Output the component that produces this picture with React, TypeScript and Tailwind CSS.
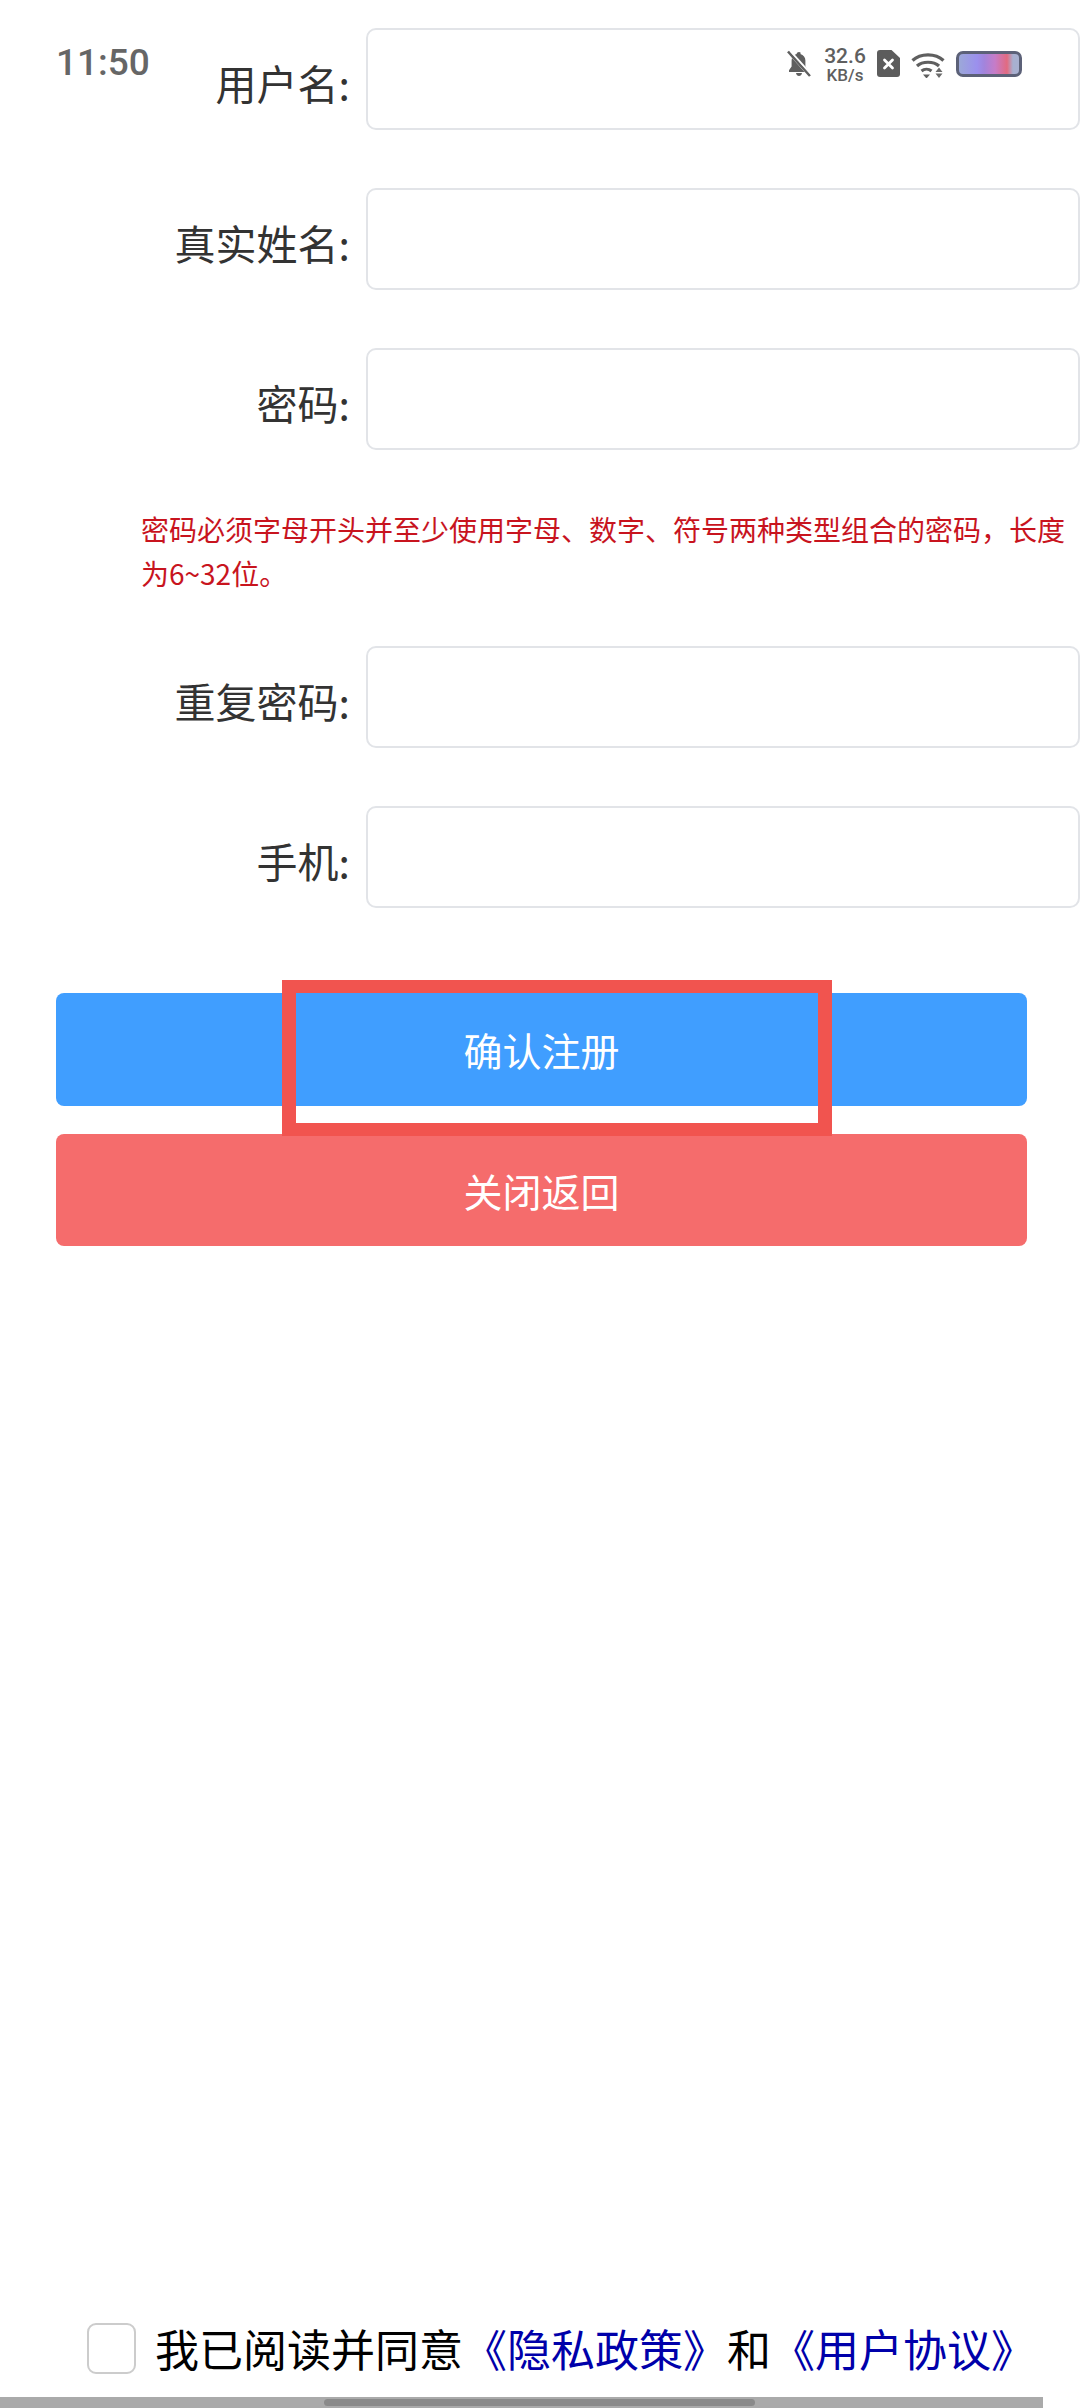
const cjk = "font-['Noto_Sans_CJK_SC','Noto_Sans',sans-serif]";

function Field({ label, type = 'text' }: { label: string; type?: string }) {
  return (
    <div className="flex h-[102px] items-center">
      <label className="w-[350px] shrink-0 pt-[6px] text-right text-[41px] leading-[60px] text-[#333333]">{label}</label>
      <input
        type={type}
        className="ml-[16px] h-[102px] w-[714px] shrink-0 rounded-[10px] border-2 border-[#e2e4e8] bg-white outline-none"
      />
    </div>
  );
}

function BellOffIcon() {
  return (
    <svg width="26" height="27" viewBox="0 0 26 27" fill="none">
      <path d="M13 2c-1.3 0-2.2.8-2.4 1.9C7.5 4.8 5.6 7.3 5.6 10.4v6L3 20.2V22h15.5L5.6 7.5M8 5.5 22 21v-.8l-2.6-3.8v-6c0-3.1-1.9-5.6-5-6.5C15.200 2.800 14.300 2 13 2Z" fill="#5f5f5f" />
      <path d="M10 23h6c-.3 1.800-1.500 3-3 3s-2.700-1.200-3-3Z" fill="#5f5f5f" />
      <path d="M2 1.500 24 26" stroke="#5f5f5f" strokeWidth="2.600" />
      <path d="M4.500 1 26 25" stroke="#ffffff" strokeWidth="1.600" />
    </svg>
  );
}

function SimIcon() {
  return (
    <svg width="23" height="27" viewBox="0 0 23 27">
      <path d="M3 0h11.500L23 8v16a3 3 0 0 1-3 3H3a3 3 0 0 1-3-3V3a3 3 0 0 1 3-3Z" fill="#5c5c5c" />
      <path d="m7.500 10 8 8m0-8-8 8" stroke="#ffffff" strokeWidth="2.800" strokeLinecap="round" />
    </svg>
  );
}

function WifiIcon() {
  return (
    <svg width="34" height="26" viewBox="0 0 34 26" fill="none">
      <path d="M1.500 8.500C9.500 1 24.500 1 32.500 8.500" stroke="#5f5f5f" strokeWidth="3.200" />
      <path d="M6 14c5.500-5 16.500-5 22 0" stroke="#5f5f5f" strokeWidth="3.200" />
      <path d="M10.500 19c3-2.500 7-2.500 10 0" stroke="#5f5f5f" strokeWidth="3" />
      <path d="m12 22.500h7L15.500 26.500Z" fill="#5f5f5f" />
      <path d="m28 15.500 3.500 4.500h-7Zm-3.500 6h7L28 26Z" fill="#6a6a6a" />
    </svg>
  );
}

function StatusBar() {
  return (
    <div className="absolute left-0 top-0 h-[90px] w-full font-['Roboto',sans-serif] text-[#5f5f5f]">
      <span className="absolute left-[56px] top-[41px] text-[37px] font-medium leading-[44px] text-[#666666]">11:50</span>
      <div className="absolute left-[786px] top-[47px] flex items-start">
        <div className="mt-[3px]">
          <BellOffIcon />
        </div>
        <div className="ml-[10px] flex w-[46px] flex-col items-center">
          <span className="text-[21px] font-medium leading-[18px]">32.6</span>
          <span className="mt-[2px] text-[17px] font-medium leading-[17px]">KB/s</span>
        </div>
        <div className="ml-[9px] mt-[3px]">
          <SimIcon />
        </div>
        <div className="ml-[11px] mt-[5px]">
          <WifiIcon />
        </div>
        <div className="ml-[11px] mt-[4px] h-[26px] w-[66px] rounded-[7px] border-[3px] border-[#5c6178] bg-[linear-gradient(90deg,#9ca8d8_0%,#9b90ee_30%,#a284dc_42%,#c67cc8_60%,#e26a80_80%,#a8b0d0_90%)]" />
      </div>
    </div>
  );
}

export default function App() {
  return (
    <div className={`relative flex h-[2408px] w-[1080px] flex-col overflow-hidden bg-white ${cjk}`}>
      <StatusBar />

      <form className="flex flex-col pt-[28px]">
        <div className="flex flex-col gap-[58px]">
          <Field label="用户名:" />
          <Field label="真实姓名:" />
          <Field label="密码:" type="password" />
        </div>
        <p className="mb-[51px] mt-[57px] pl-[141px] pr-[10px] text-[28px] leading-[44px] text-[#c8141e]">
          密码必须字母开头并至少使用字母、数字、符号两种类型组合的密码，长度为6~32位。
        </p>
        <div className="flex flex-col gap-[58px]">
          <Field label="重复密码:" type="password" />
          <Field label="手机:" />
        </div>

        <div className="relative mt-[85px] flex flex-col gap-[28px] px-[56px] pr-[53px]">
          <button type="button" className="h-[113px] rounded-[8px] bg-[#409eff] text-[39px] text-white">
            确认注册
          </button>
          <button type="button" className="h-[112px] rounded-[8px] bg-[#f56c6c] text-[39px] text-white">
            关闭返回
          </button>
          <div className="absolute left-[282px] top-[-13px] h-[156px] w-[550px] border-x-[14px] border-y-[13px] border-[#f1544f]" />
        </div>
      </form>

      <div className="mt-auto flex items-center pb-[21px] pl-[87px]">
        <span className="h-[51px] w-[49px] shrink-0 rounded-[9px] border-2 border-[#cccccc] bg-white" />
        <span className="ml-[19px] whitespace-nowrap text-[44px] leading-[56px] text-black">
          我已阅读并同意<a className="text-[#0000aa]">《隐私政策》</a>和<a className="text-[#0000aa]">《用户协议》</a>
        </span>
      </div>
      <div className="flex h-[11px] w-[1043px] items-center bg-[#aaaaaa] pl-[324px]">
        <div className="h-[7px] w-[431px] rounded-full bg-[#8a8a8a]" />
      </div>
    </div>
  );
}
